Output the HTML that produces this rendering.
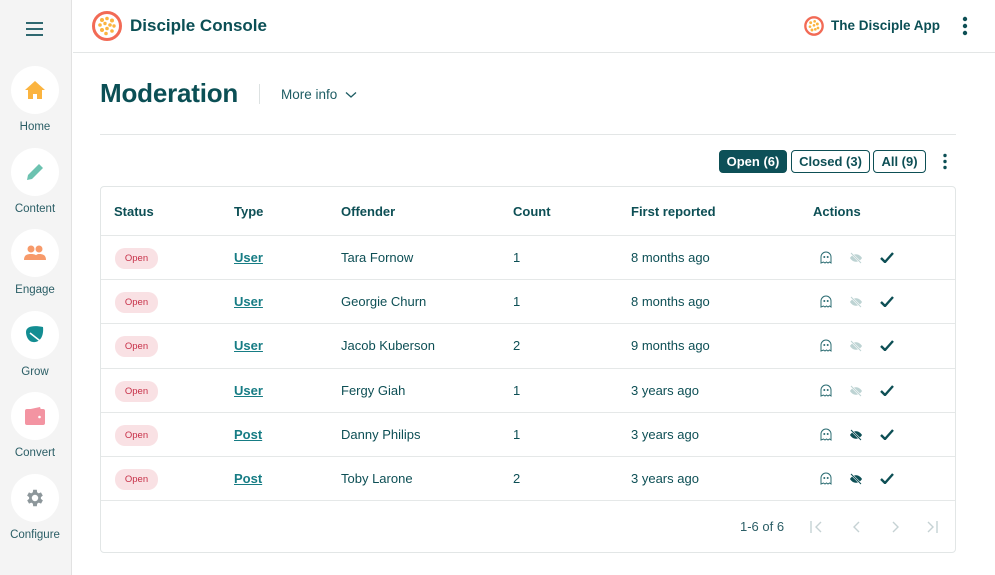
<!DOCTYPE html>
<html><head><meta charset="utf-8"><style>
*{box-sizing:border-box;margin:0;padding:0}
body{width:995px;height:575px;overflow:hidden;background:#fff;font-family:"Liberation Sans",sans-serif;color:#0d4f55;position:relative}
.side{position:absolute;left:0;top:0;width:72px;height:575px;background:#f4f4f4;border-right:1px solid #e2e2e2}
.burger{position:absolute;left:26px;top:22px;width:17px}
.burger i{display:block;height:2px;background:#2f6870;margin-bottom:4px}
.nav{position:absolute;left:11px;width:48px;text-align:center}
.nav .c{width:48px;height:48px;border-radius:50%;background:#fff;display:flex;align-items:center;justify-content:center}
.nav .l{position:absolute;top:55px;left:-20px;width:88px;text-align:center;font-size:11.5px;color:#2b5e66}
.top{position:absolute;left:73px;top:0;right:0;height:53px;border-bottom:1px solid #e3e6e6}
.abs{position:absolute}
h1{position:absolute;left:100px;top:78px;font-size:26px;font-weight:bold;color:#0b4f55;letter-spacing:-.2px}
.hr{position:absolute;left:100px;right:39px;top:134px;height:1px;background:#e3e6e6}
.btn{position:absolute;top:150px;height:23px;border:1px solid #0d4f55;border-radius:4px;font-size:13px;font-weight:bold;line-height:21px;text-align:center}
.tbl{position:absolute;left:100px;top:186px;width:856px;height:367px;border:1px solid #e2e6e6;border-radius:4px}
.row{position:absolute;left:0;right:0;border-top:1px solid #e5e8e8;font-size:13px}
.row span{position:absolute}
.hd span{font-weight:bold;font-size:13px}
.pill{background:#f9e1e4;color:#c73048;font-size:9.5px;border-radius:10px;width:43px;height:21px;line-height:21px;text-align:center}
.lk{font-weight:bold;text-decoration:underline;color:#167c84}
</style></head><body>
<div class="side">
<div class="burger"><i></i><i></i><i></i></div>
<div class="nav" style="top:66px"><div class="c"><svg width="22" height="20" viewBox="0 0 22 20"><path d="M11 1L1 10h3v9h5v-5h4v5h5v-9h3z" fill="#fbb440"/></svg></div><div class="l">Home</div></div>
<div class="nav" style="top:148px"><div class="c"><svg width="22" height="22" viewBox="0 0 22 22"><path d="M3 19l1-5L15 3l4 4L8 18z" fill="#6cc2b0"/></svg></div><div class="l">Content</div></div>
<div class="nav" style="top:229px"><div class="c"><svg width="22" height="18" viewBox="0 0 22 18"><circle cx="7" cy="5" r="3.5" fill="#f79a6a"/><circle cx="15" cy="5" r="3.5" fill="#f79a6a"/><path d="M0 16c0-5 3-6 7-6s7 1 7 6zM10 16c1-5 3-6 5-6 4 0 7 1 7 6z" fill="#f79a6a"/></svg></div><div class="l">Engage</div></div>
<div class="nav" style="top:311px"><div class="c"><svg width="22" height="22" viewBox="0 0 22 22"><path d="M2 8C2 2 10 1 19 3c1 9-3 16-10 15C5 18 2 13 2 8z" fill="#138d92"/><path d="M6 9l14 11" stroke="#fff" stroke-width="1.5"/></svg></div><div class="l">Grow</div></div>
<div class="nav" style="top:392px"><div class="c"><svg width="22" height="20" viewBox="0 0 22 20"><rect x="1" y="3" width="20" height="16" rx="2" fill="#f394a2"/><path d="M2 4l14-3 1 3z" fill="#f394a2"/><circle cx="15.5" cy="11" r="1.3" fill="#fff"/></svg></div><div class="l">Convert</div></div>
<div class="nav" style="top:474px"><div class="c"><svg width="22" height="22" viewBox="0 0 24 24"><path fill="#8d979b" d="M19.4 13a7.5 7.5 0 000-2l2.1-1.6-2-3.5-2.5 1a7 7 0 00-1.7-1L15 3h-4l-.4 2.9a7 7 0 00-1.7 1l-2.5-1-2 3.5L6.6 11a7.5 7.5 0 000 2l-2.1 1.6 2 3.5 2.5-1a7 7 0 001.7 1L11 21h4l.4-2.9a7 7 0 001.7-1l2.5 1 2-3.5zM13 15.5a3.5 3.5 0 110-7 3.5 3.5 0 010 7z" transform="translate(-1 0)"/></svg></div><div class="l">Configure</div></div>
</div>
<div class="top"></div>
<svg class="abs" style="left:92px;top:11px" width="30" height="30" viewBox="0 0 30 30"><circle cx="15" cy="15" r="13.5" fill="#fff" stroke="#f26a55" stroke-width="3"/><g fill="#fbb440"><circle cx="10" cy="9" r="2"/><circle cx="15" cy="7.5" r="1.8"/><circle cx="20" cy="9.5" r="2"/><circle cx="8" cy="14" r="1.8"/><circle cx="13" cy="12.5" r="1.7"/><circle cx="18" cy="14" r="1.8"/><circle cx="22" cy="15" r="1.7"/><circle cx="10" cy="19" r="2"/><circle cx="15" cy="17.5" r="1.8"/><circle cx="20" cy="20" r="1.8"/><circle cx="14" cy="22.5" r="1.8"/></g></svg>
<div class="abs" style="left:130px;top:16px;font-size:17px;font-weight:bold;color:#0b4f55">Disciple Console</div>
<svg class="abs" style="left:804px;top:16px" width="20" height="20" viewBox="0 0 30 30"><circle cx="15" cy="15" r="13" fill="#fff" stroke="#f26a55" stroke-width="3.5"/><g fill="#fbb440"><circle cx="10" cy="10" r="2.2"/><circle cx="16" cy="8" r="2"/><circle cx="20" cy="12" r="2.2"/><circle cx="9" cy="16" r="2"/><circle cx="15" cy="14" r="2"/><circle cx="21" cy="18" r="2"/><circle cx="12" cy="21" r="2.2"/><circle cx="17" cy="20" r="2"/></g></svg>
<div class="abs" style="left:831px;top:18px;font-size:13.5px;font-weight:bold;color:#0b4f55">The Disciple App</div>
<svg class="abs" style="left:961px;top:16px" width="8" height="22"><circle cx="4" cy="3" r="2.2" fill="#0d4f55"/><circle cx="4" cy="10" r="2.2" fill="#0d4f55"/><circle cx="4" cy="17" r="2.2" fill="#0d4f55"/></svg>
<h1>Moderation</h1>
<div class="abs" style="left:259px;top:84px;width:1px;height:20px;background:#dde2e2"></div>
<div class="abs" style="left:281px;top:87px;font-size:13.5px;color:#1d5c63">More info <svg width="12" height="8" style="margin-left:4px"><path d="M1 1.5l5 4.5 5-4.5" stroke="#1d5c63" stroke-width="1.3" fill="none"/></svg></div>
<div class="hr"></div>
<div class="btn" style="left:719px;width:68px;background:#0d5058;color:#fff">Open (6)</div>
<div class="btn" style="left:791px;width:79px;background:#fff">Closed (3)</div>
<div class="btn" style="left:873px;width:53px;background:#fff">All (9)</div>
<svg class="abs" style="left:941px;top:153px" width="8" height="18"><circle cx="4" cy="2.5" r="1.7" fill="#0d4f55"/><circle cx="4" cy="8.5" r="1.7" fill="#0d4f55"/><circle cx="4" cy="14.5" r="1.7" fill="#0d4f55"/></svg>
<div class="tbl">
<div class="row hd" style="top:0;height:48px;border-top:none"><span style="left:13px;top:17px">Status</span><span style="left:133px;top:17px">Type</span><span style="left:240px;top:17px">Offender</span><span style="left:412px;top:17px">Count</span><span style="left:530px;top:17px">First reported</span><span style="left:712px;top:17px">Actions</span></div>
<div id="rows"></div>
<div class="row" style="top:313px;height:53px"><span style="left:639px;top:18px;color:#2b5e66">1-6 of 6</span>
<svg class="abs" style="left:708px;top:19px" width="130" height="14" viewBox="0 0 130 14" fill="none" stroke="#c5d2d4" stroke-width="1.4"><path d="M2 1v12M12 2l-5 5 5 5M50 2l-5 5 5 5M84 2l5 5-5 5M119 2l5 5-5 5M128 1v12"/></svg></div>
</div>
<script>
var d=[["User","Tara Fornow","1","8 months ago",0],["User","Georgie Churn","1","8 months ago",0],["User","Jacob Kuberson","2","9 months ago",0],["User","Fergy Giah","1","3 years ago",0],["Post","Danny Philips","1","3 years ago",1],["Post","Toby Larone","2","3 years ago",1]];
var tops=[48,92,136,181,225,269],h="";
d.forEach(function(r,i){var ec=r[4]?"#0d4f55":"#bdd3d3";
h+='<div class="row" style="top:'+tops[i]+'px;height:44px"><span class="pill" style="left:14px;top:12px">Open</span><span class="lk" style="left:133px;top:14px">'+r[0]+'</span><span style="left:240px;top:14px">'+r[1]+'</span><span style="left:412px;top:14px">'+r[2]+'</span><span style="left:530px;top:14px">'+r[3]+'</span>'+
'<svg style="position:absolute;left:719px;top:15px" width="12" height="13" viewBox="0 0 12 13" fill="none" stroke="#2b6c72" stroke-width="1"><path d="M1 12V6a5 5 0 0110 0v6l-1.5-1-1.5 1-1.5-1-1.5 1-1.5-1z"/><circle cx="4.3" cy="6" r=".5" fill="#2b6c72"/><circle cx="7.7" cy="6" r=".5" fill="#2b6c72"/></svg>'+
'<svg style="position:absolute;left:748px;top:16px" width="14" height="12" viewBox="0 0 14 12"><path d="M1 6c3-5 9-5 12 0-3 5-9 5-12 0z" fill="'+ec+'"/><path d="M2 1l10 10" stroke="#fff" stroke-width="2"/><path d="M2 1l10 10" stroke="'+ec+'" stroke-width="1"/></svg>'+
'<svg style="position:absolute;left:779px;top:16px" width="14" height="11" viewBox="0 0 14 11"><path d="M1 6l4 4 8-9" stroke="#0d4f55" stroke-width="2.4" fill="none"/></svg></div>';});
document.getElementById("rows").innerHTML=h;
</script>
</body></html>
